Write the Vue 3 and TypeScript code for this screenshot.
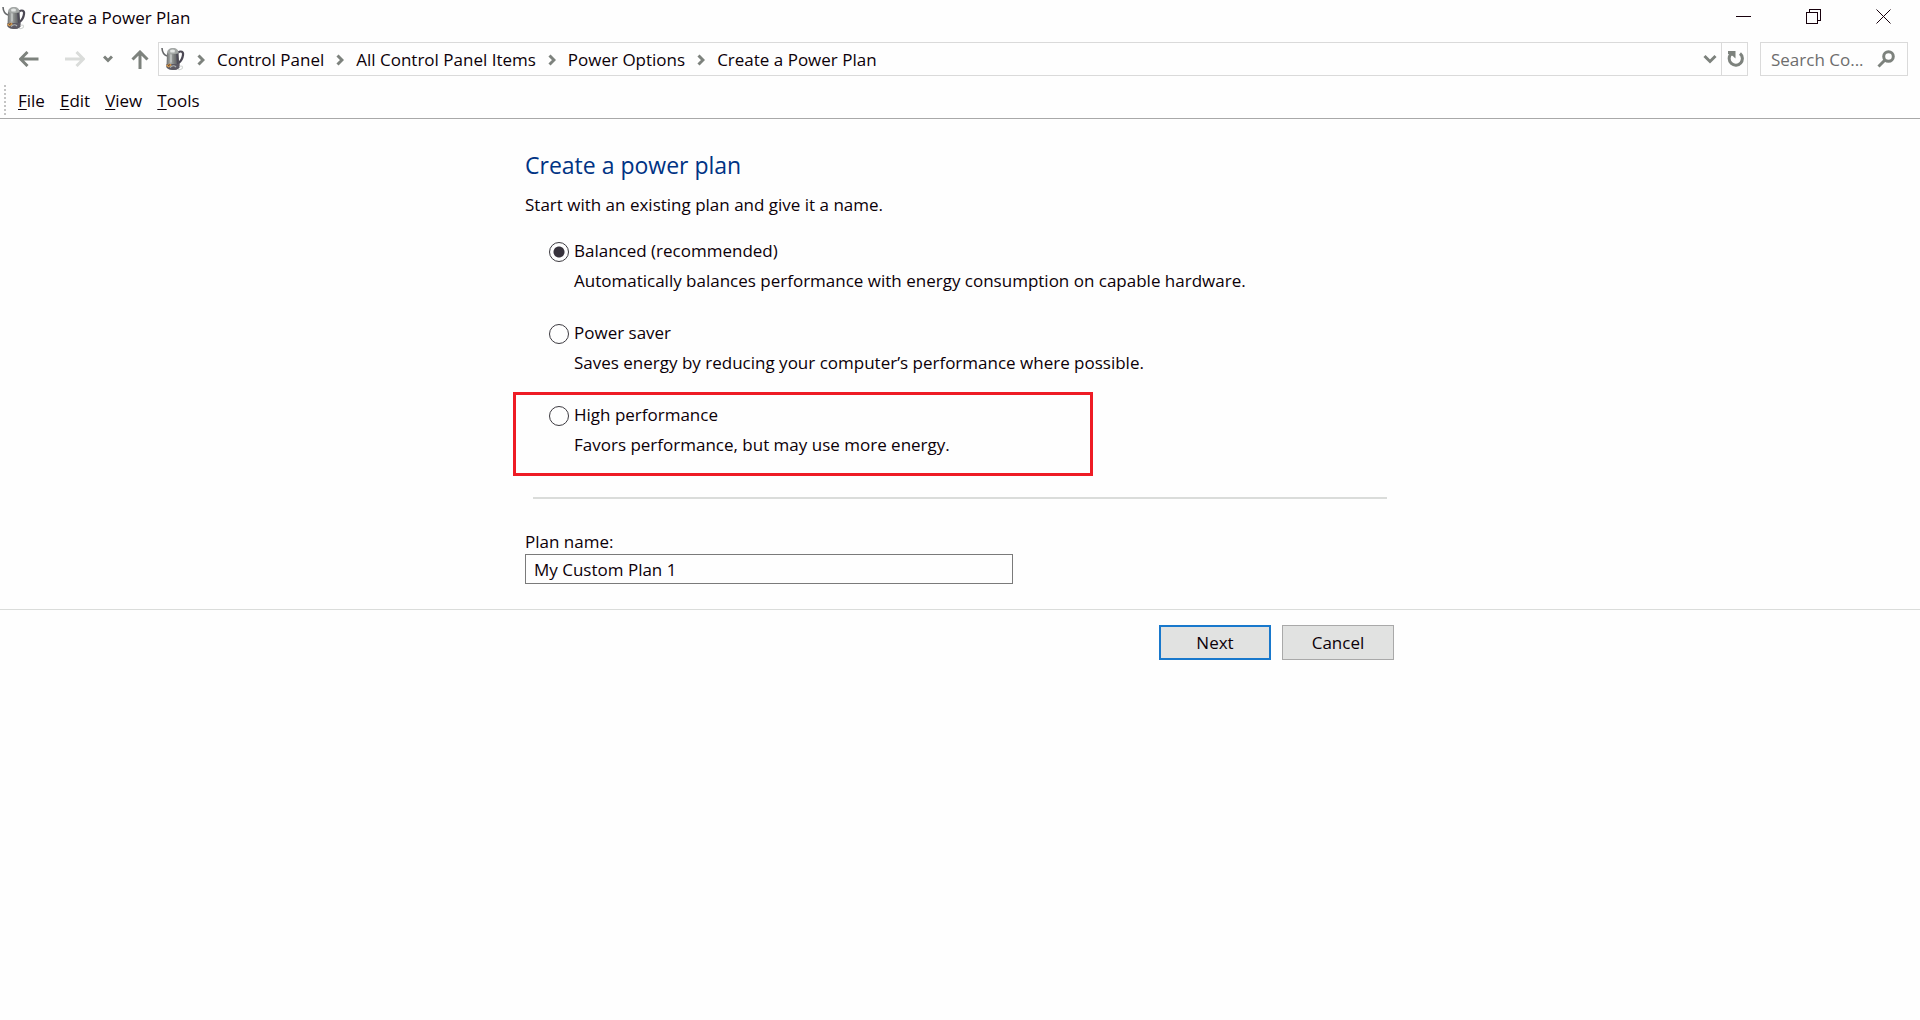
<script setup lang="ts">
import { ref } from 'vue'

interface Plan {
  id: string
  name: string
  description: string
  highlighted?: boolean
}

const crumbs: string[] = ['Control Panel', 'All Control Panel Items', 'Power Options', 'Create a Power Plan']
const menus: string[] = ['File', 'Edit', 'View', 'Tools']
const plans: Plan[] = [
  {
    id: 'balanced',
    name: 'Balanced (recommended)',
    description: 'Automatically balances performance with energy consumption on capable hardware.',
  },
  {
    id: 'saver',
    name: 'Power saver',
    description: 'Saves energy by reducing your computer’s performance where possible.',
  },
  {
    id: 'high',
    name: 'High performance',
    description: 'Favors performance, but may use more energy.',
    highlighted: true,
  },
]

const selected = ref<string>('balanced')
const planName = ref<string>('My Custom Plan 1')
</script>

<template>
  <div class="window">
    <svg class="defs" width="0" height="0" aria-hidden="true">
      <defs>
        <linearGradient id="metal" x1="0" x2="1" y1="0" y2="0">
          <stop offset="0" stop-color="#6b6d6d" />
          <stop offset="0.3" stop-color="#a9adab" />
          <stop offset="0.6" stop-color="#7a7d7c" />
          <stop offset="1" stop-color="#4c4c52" />
        </linearGradient>
        <symbol id="kettle" viewBox="0 0 24 24">
          <path d="M17 5.500c3-2 5.600-.8 5 2.500-.4 3-1.700 6-4.500 8" fill="none" stroke="#4b4854" stroke-width="2.200" />
          <path d="M1 1c.2 4 1 6.500 5 8" fill="none" stroke="#66686a" stroke-width="1.600" />
          <path d="M6 5.500h11.500l1 15c-1.500 3.300-11 3.500-13 0z" fill="url(#metal)" />
          <path d="M6 6c0-3 2.500-5 6-5s5.600 2 5.600 5c-2 1.300-9.500 1.300-11.600 0z" fill="#a3a7a5" />
          <path d="M9 3.500c1.500-1.500 4-1.500 5 0l-.5 2h-4z" fill="#e2e5e3" />
          <path d="M10 7.500v8" stroke="#c4c8c6" stroke-width="1.500" />
          <path d="M16 7l.8 12" stroke="#4e4b58" stroke-width="1.500" />
          <path d="M5.500 17h13v3c-2 4-11 4-13 0z" fill="#5c5963" />
          <path d="M5 18.500l3.500-2 2.500 1.500-3.500 2.500z" fill="#d99b4c" />
          <path d="M7 18.500l2-.8" stroke="#554033" stroke-width="1" />
          <path d="M9 20.500c2-2 4.500-2 6-.5" fill="none" stroke="#aeb2b0" stroke-width="1.200" />
          <path d="M17 22.500c3 .5 5-1 4.500-2.500s-2.500-1-3-.5" fill="none" stroke="#d4d7d5" stroke-width="1.200" />
        </symbol>
      </defs>
    </svg>

    <header class="titlebar">
      <svg class="kettle" width="24" height="24" aria-hidden="true"><use href="#kettle" /></svg>
      <span class="title">Create a Power Plan</span>
      <div class="controls">
        <button type="button" aria-label="Minimize">
          <svg class="line" width="15" height="15" viewBox="0 0 15 15" shape-rendering="crispEdges"><path d="M0 7.500h15" /></svg>
        </button>
        <button type="button" aria-label="Restore">
          <svg class="line" width="15" height="15" viewBox="0 0 15 15" shape-rendering="crispEdges">
            <path d="M.5 3.500h11v11H.5zM3.500 3.500v-3h11v11h-3" />
          </svg>
        </button>
        <button type="button" aria-label="Close">
          <svg class="line" width="15" height="15" viewBox="0 0 15 15"><path d="M.5.5l14 14M14.500.5l-14 14" /></svg>
        </button>
      </div>
    </header>

    <nav class="navbar" aria-label="Location">
      <button class="back" type="button" aria-label="Back">
        <svg class="line" width="20" height="16" viewBox="0 0 20 16"><path d="M19.500 8H2M8.500 1L1.500 8l7 7" /></svg>
      </button>
      <button class="forward" type="button" aria-label="Forward">
        <svg class="line" width="20" height="16" viewBox="0 0 20 16"><path d="M0 8h17.500M11.500 1l7 7-7 7" /></svg>
      </button>
      <button class="recent" type="button" aria-label="Recent locations">
        <svg class="line" width="10" height="8" viewBox="0 0 10 8"><path d="M1 1.500l4 4 4-4" /></svg>
      </button>
      <button class="up" type="button" aria-label="Up">
        <svg class="line" width="18" height="19" viewBox="0 0 18 19"><path d="M9 19V2M1.500 9.500L9 2l7.500 7.500" /></svg>
      </button>
      <div class="address">
        <svg class="kettle" width="24" height="24" aria-hidden="true"><use href="#kettle" /></svg>
        <ol class="crumbs">
          <li v-for="crumb in crumbs" :key="crumb">
            <svg class="line" width="8" height="12" viewBox="0 0 8 12" aria-hidden="true"><path d="M1.500 1.500L6 6l-4.500 4.500" /></svg>
            <a href="#">{{ crumb }}</a>
          </li>
        </ol>
        <button class="history" type="button" aria-label="Previous locations">
          <svg class="line" width="14" height="10" viewBox="0 0 14 10"><path d="M1.500 2L7 7.500 12.500 2" /></svg>
        </button>
        <button class="refresh" type="button" aria-label="Refresh">
          <svg class="line" width="18" height="18" viewBox="0 0 18 18">
            <path d="M14 3.500A6.600 6.600 0 1 1 5 4" />
            <path class="solid" d="M2 1h7.500v7.500L6.800 6 2 4z" />
          </svg>
        </button>
      </div>
      <label class="search">
        <input type="text" placeholder="Search Co..." aria-label="Search Control Panel" />
        <svg class="line" width="18" height="18" viewBox="0 0 18 18" aria-hidden="true">
          <circle cx="11.500" cy="6.500" r="4.800" />
          <path d="M8 10L1.500 16.500" />
        </svg>
      </label>
    </nav>

    <div class="menubar">
      <span class="grip" aria-hidden="true"></span>
      <button v-for="menu in menus" :key="menu" type="button"><u>{{ menu[0] }}</u>{{ menu.slice(1) }}</button>
    </div>

    <form @submit.prevent>
      <main class="column">
        <h1>Create a power plan</h1>
        <p class="intro">Start with an existing plan and give it a name.</p>

        <div class="plans" role="radiogroup" aria-label="Existing plans">
          <div v-for="plan in plans" :key="plan.id" class="plan" :class="{ highlighted: plan.highlighted }">
            <input :id="plan.id" v-model="selected" type="radio" name="plan" :value="plan.id" />
            <label :for="plan.id">{{ plan.name }}</label>
            <p>{{ plan.description }}</p>
          </div>
        </div>

        <hr />

        <label class="name-label" for="plan-name">Plan name:</label>
        <input id="plan-name" v-model="planName" class="name-field" type="text" />
      </main>

      <footer>
        <div class="column actions">
          <button class="default" type="submit">Next</button>
          <button type="button">Cancel</button>
        </div>
      </footer>
    </form>
  </div>
</template>

<style>
body {
  margin: 0;
  background: #fefefe;
}
</style>

<style scoped>
.window {
  color: #0c0008;
  font: 17px/24px "Open Sans", "Noto Sans", sans-serif;
}

.defs {
  position: absolute;
}

button,
input {
  margin: 0;
  padding: 0;
  border: 0;
  border-radius: 0;
  background: none;
  color: inherit;
  font: inherit;
}

svg {
  display: block;
  flex: none;
}

.line {
  fill: none;
}

.kettle {
  stroke: none;
}

.titlebar {
  display: flex;
  align-items: center;
  height: 36px;
  padding: 0 2px;
}

.title {
  margin-left: 5px;
}

.controls {
  display: flex;
  align-self: stretch;
  margin-left: auto;
}

.controls button {
  display: flex;
  align-items: center;
  justify-content: center;
  width: 70px;
  padding-bottom: 3px;
}

.controls .line {
  stroke: #17000c;
}

.navbar {
  display: flex;
  align-items: center;
  height: 46px;
  padding: 0 12px 0 19px;
  stroke: #7d827d;
  stroke-width: 3;
}

.forward {
  margin-left: 26px;
  stroke: #dadcda;
}

.recent {
  margin-left: 18px;
}

.up {
  margin-left: 18px;
}

.address {
  display: flex;
  flex: 1;
  align-items: center;
  box-sizing: border-box;
  height: 34px;
  margin-left: 9px;
  padding-left: 2px;
  border: 1px solid #dadada;
}

.crumbs {
  display: flex;
  flex: 1;
  margin: 0;
  padding: 1px 0 0;
  list-style: none;
}

.crumbs li {
  display: flex;
  align-items: center;
  gap: 12px;
  padding-left: 12px;
}

.crumbs a {
  color: inherit;
  text-decoration: none;
}

.history {
  margin-right: 4px;
}

.refresh {
  display: flex;
  align-items: center;
  justify-content: center;
  align-self: stretch;
  width: 26px;
  border-left: 1px solid #dadada;
}

.refresh .solid {
  fill: #7d827d;
  stroke: none;
}

.search {
  display: flex;
  align-items: center;
  box-sizing: border-box;
  width: 148px;
  height: 34px;
  margin-left: 12px;
  padding: 0 12px 0 10px;
  border: 1px solid #dadada;
}

.search input {
  flex: 1;
  min-width: 0;
  padding-top: 1px;
}

.search input::placeholder {
  color: #6d6d6d;
  opacity: 1;
}

.menubar {
  display: flex;
  align-items: center;
  gap: 15px;
  height: 36px;
  border-bottom: 1px solid #a8a8a8;
}

.menubar button {
  padding-top: 2px;
}

.grip {
  width: 2px;
  height: 30px;
  margin: 0 -3px 0 4px;
  background: repeating-linear-gradient(#c4c4c4 0 2px, transparent 2px 4px);
}

u {
  text-decoration-thickness: 1px;
  text-underline-offset: 2px;
}

.column {
  box-sizing: border-box;
  max-width: 870px;
  margin: 0 auto;
}

h1 {
  margin: 0;
  padding-top: 30px;
  color: #003384;
  font-size: 23px;
  font-weight: 400;
  line-height: 32px;
}

.intro {
  margin: 12px 0 0;
}

.plans {
  display: grid;
  gap: 28px;
  margin-top: 22px;
  padding-left: 24px;
}

.plan {
  position: relative;
  display: grid;
  grid-template-columns: 20px 1fr;
  gap: 6px 5px;
  align-items: center;
}

.plan p {
  grid-column: 2;
  margin: 0;
}

.plan label {
  justify-self: start;
}

.plan input {
  appearance: none;
  width: 20px;
  height: 20px;
  margin-top: 2px;
  border: 1px solid #3c3a40;
  border-radius: 50%;
}

.plan input:checked {
  background: radial-gradient(circle, #37323c 5px, transparent 6px);
}

.highlighted::after {
  content: "";
  position: absolute;
  top: -11px;
  left: -36px;
  box-sizing: border-box;
  width: 580px;
  height: 84px;
  border: 3px solid #ee1c25;
  pointer-events: none;
}

hr {
  height: 2px;
  margin: 40px 8px 0;
  border: 0;
  background: #dadcda;
}

.name-label {
  display: block;
  margin-top: 31px;
}

.name-field {
  box-sizing: border-box;
  width: 488px;
  height: 30px;
  padding: 0 8px;
  border: 1px solid #7a7a7a;
}

footer {
  margin-top: 25px;
  padding-top: 15px;
  border-top: 1px solid #dadcda;
}

.actions {
  display: flex;
  justify-content: flex-end;
  gap: 11px;
  padding-right: 1px;
}

.actions button {
  box-sizing: border-box;
  width: 112px;
  height: 35px;
  border: 1px solid #a9a9a9;
  background: #e1e2e1;
}

.actions .default {
  border: 2px solid #1878cc;
}
</style>
